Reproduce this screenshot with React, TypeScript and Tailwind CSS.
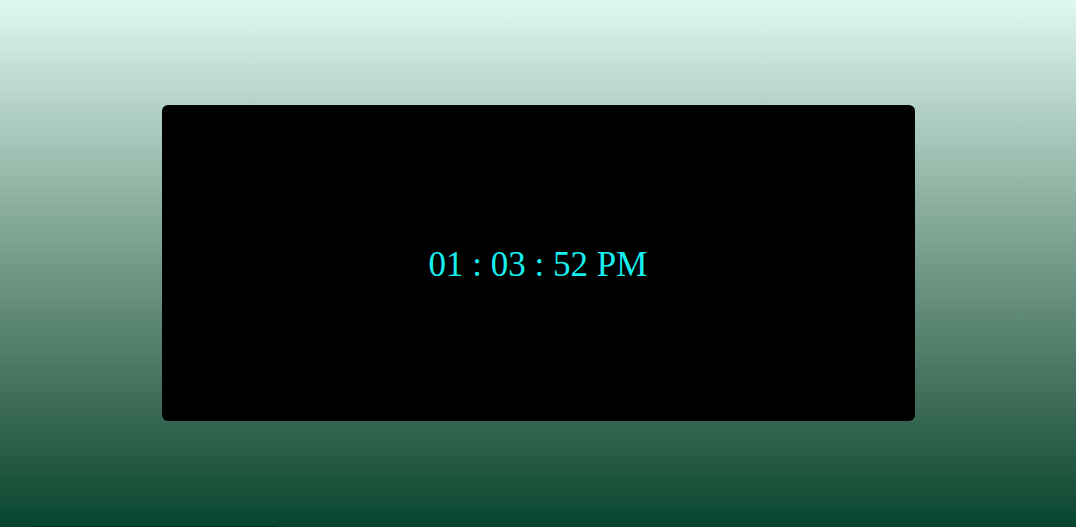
const Clock = () => {
  return (
    <div className="w-[753px] h-[316px] bg-black rounded-md flex items-center justify-center">
      <span className="text-[35px] leading-none text-[#17efee] font-['Liberation_Serif',serif] pt-[2px]">
        01 : 03 : 52 PM
      </span>
    </div>
  );
};

const App = () => {
  return (
    <div className="h-screen flex flex-col bg-gradient-to-b from-[#e0f9f0] to-[#03452f]">
      <div className="flex-1 flex items-center justify-center">
        <Clock />
      </div>
      <div className="h-px ml-[34px] w-[241px] bg-[#02301f]" />
    </div>
  );
};

export default App;
